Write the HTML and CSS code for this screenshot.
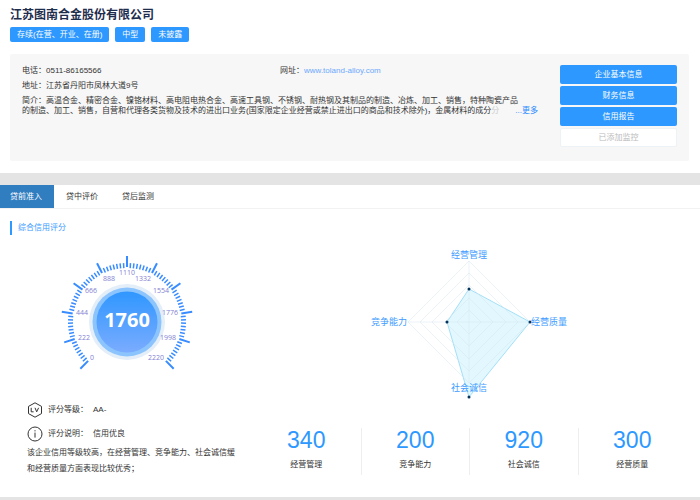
FILE: index.html
```html
<!DOCTYPE html>
<html lang="zh-CN">
<head>
<meta charset="utf-8">
<meta name="viewport" content="width=device-width, initial-scale=1">
<title>江苏图南合金股份有限公司</title>
<link rel="stylesheet" href="styles.css">
</head>
<body>
<header class="company">
  <h1 class="company-name">江苏图南合金股份有限公司</h1>
  <div class="tags">
    <span class="tag">存续(在营、开业、在册)</span>
    <span class="tag">中型</span>
    <span class="tag">未披露</span>
  </div>
  <section class="info">
    <div class="details">
      <div class="detail-row">
        <p>电话：0511-86165566</p>
        <p>网址：<a class="site" href="#site">www.toland-alloy.com</a></p>
      </div>
      <p>地址：江苏省丹阳市凤林大道9号</p>
      <div class="intro">
        <p>简介：高温合金、精密合金、镍铬材料、高电阻电热合金、高速工具钢、不锈钢、耐热钢及其制品的制造、冶炼、加工、销售，特种陶瓷产品</p>
        <p class="intro-last"><span class="intro-text">的制造、加工、销售，自营和代理各类货物及技术的进出口业务(国家限定企业经营或禁止进出口的商品和技术除外)，金属材料的成分<span class="fade">分</span></span><a class="more" href="#more">...更多</a></p>
      </div>
    </div>
    <div class="actions">
      <button class="action" type="button">企业基本信息</button>
      <button class="action" type="button">财务信息</button>
      <button class="action" type="button">信用报告</button>
      <button class="action action-done" type="button" disabled>已添加监控</button>
    </div>
  </section>
</header>
<main class="report">
  <nav class="tabs">
    <a class="tab tab-active" href="#before">贷前准入</a>
    <a class="tab" href="#during">贷中评价</a>
    <a class="tab" href="#after">贷后监测</a>
  </nav>
  <h2 class="section-title">综合信用评分</h2>
  <div class="panels">
    <section class="score">
      <svg class="gauge" viewBox="-72 -72 144 128" role="img" aria-label="1760">
        <defs>
          <linearGradient id="disc" x1="0" y1="0" x2="0" y2="1">
            <stop offset="0" stop-color="#3097ff"/>
            <stop offset="1" stop-color="#7aacff"/>
          </linearGradient>
        </defs>
        <g id="ticks"></g>
        <circle r="38" fill="#e3eef9"/>
        <circle r="34.500" fill="#8cc4fd"/>
        <circle r="30.500" fill="url(#disc)"/>
        <text class="gauge-value" y="5">1760</text>
        <g class="gauge-labels">
          <text x="-35" y="38">0</text>
          <text x="-43" y="18">222</text>
          <text x="-45" y="-7">444</text>
          <text x="-36" y="-29">666</text>
          <text x="-18" y="-41">888</text>
          <text x="0" y="-47">1110</text>
          <text x="16" y="-41">1332</text>
          <text x="34" y="-29">1554</text>
          <text x="43" y="-7">1776</text>
          <text x="41" y="18">1998</text>
          <text x="29" y="38">2220</text>
        </g>
      </svg>
      <dl class="rating">
        <div class="rating-row">
          <svg class="rating-icon" viewBox="0 0 16 16" aria-hidden="true">
            <path d="M8 .8 14.500 4.400V11.600L8 15.200 1.500 11.600V4.400Z"/>
            <path d="M4.200 5.800V9.800H6.600M8 5.800 9.700 9.800 11.600 5.800"/>
          </svg>
          <dt>评分等级：</dt><dd>AA-</dd>
        </div>
        <div class="rating-row">
          <svg class="rating-icon" viewBox="0 0 16 16" aria-hidden="true">
            <circle cx="8" cy="8" r="7"/>
            <path d="M8 6.600V11.600M8 4.200V5.400"/>
          </svg>
          <dt>评分说明：</dt><dd>信用优良</dd>
        </div>
      </dl>
      <p class="remark">该企业信用等级较高，在经营管理、竞争能力、社会诚信缓<br>和经营质量方面表现比较优秀；</p>
    </section>
    <section class="dimensions">
      <svg class="radar" viewBox="-105 -80 210 162" role="img" aria-label="经营管理 竞争能力 社会诚信 经营质量">
        <path class="radar-area" d="M0-33 61 0 0 75-22 0Z"/>
        <g class="radar-grid">
          <path d="M0-61 61 0 0 61-61 0Z"/>
          <path d="M0-49 49 0 0 49-49 0Z"/>
          <path d="M0-37 37 0 0 37-37 0Z"/>
          <path d="M0-24 24 0 0 24-24 0Z"/>
          <path d="M0-12 12 0 0 12-12 0Z"/>
          <path d="M0-61V61M-61 0H61"/>
        </g>
        <g class="radar-labels">
          <text x="0" y="-64">经营管理</text>
          <text x="-80" y="3">竞争能力</text>
          <text x="0" y="69">社会诚信</text>
          <text x="80" y="3">经营质量</text>
        </g>
        <g class="radar-points">
          <circle cx="0" cy="-33" r="1.500"/>
          <circle cx="61" cy="0" r="1.500"/>
          <circle cx="0" cy="75" r="1.500"/>
          <circle cx="-22" cy="0" r="1.500"/>
        </g>
      </svg>
      <ul class="stats">
        <li><strong>340</strong><span>经营管理</span></li>
        <li><strong>200</strong><span>竞争能力</span></li>
        <li><strong>920</strong><span>社会诚信</span></li>
        <li><strong>300</strong><span>经营质量</span></li>
      </ul>
    </section>
  </div>
</main>
<script src="gauge.js"></script>
</body>
</html>
```
FILE: gauge.js
```js
// Ten labelled divisions over 270 degrees, each with minor ticks between.
const ticks = document.getElementById('ticks');
const perDivision = 8;
const total = 10 * perDivision;
for (let i = 0; i <= total; i++) {
  const major = i % perDivision === 0;
  const line = document.createElementNS('http://www.w3.org/2000/svg', 'line');
  line.setAttribute('y1', major ? -66 : -59);
  line.setAttribute('y2', major ? -55 : -54);
  line.setAttribute('class', major ? 'tick tick-major' : 'tick');
  line.setAttribute('transform', `rotate(${-135 + (270 * i) / total})`);
  ticks.appendChild(line);
}
```
FILE: styles.css
```css
* {
  box-sizing: border-box;
}

body {
  margin: 0;
  background: #e4e4e4;
  color: #333;
  font: 8px/12px "Liberation Sans", "Noto Sans CJK SC", sans-serif;
}

h1, h2, p, dl, dd, ul {
  margin: 0;
  padding: 0;
}

a {
  text-decoration: none;
}

.company {
  padding: 7px 11px 12px 10px;
  background: #fff;
}

.company-name {
  color: #1f2d4d;
  font-size: 12px;
  line-height: 16px;
}

.tags {
  display: flex;
  gap: 6px;
  margin-top: 4px;
}

.tag {
  padding: 0 7px;
  border-radius: 2px;
  background: #2d98ff;
  color: #fff;
  line-height: 15px;
}

.info {
  display: flex;
  justify-content: space-between;
  gap: 20px;
  margin-top: 12px;
  padding: 11px 12px 14px;
  border-radius: 2px;
  background: #f7f7f7;
}

.details {
  flex: 0 1 516px;
  display: flex;
  flex-direction: column;
  gap: 3px;
  min-width: 0;
}

.detail-row {
  display: grid;
  grid-template-columns: 1fr 1fr;
}

.site {
  color: #6ca8ff;
}

.intro {
  padding-top: 1px;
  line-height: 10px;
}

.intro-last {
  display: flex;
  justify-content: space-between;
}

.fade {
  color: #ccc;
}

.more {
  color: #2d8cff;
}

.actions {
  flex: 0 0 117px;
  display: flex;
  flex-direction: column;
  gap: 2px;
}

.action {
  height: 19px;
  padding: 0;
  border: 0;
  border-radius: 2px;
  background: #2d98ff;
  color: #fff;
  font: inherit;
}

.action-done {
  border: 1px solid #edf2f6;
  background: #fff;
  color: #bbb;
}

.report {
  margin-top: 12px;
  padding-bottom: 20px;
  background: #fff;
}

.tabs {
  display: flex;
  border-bottom: 1px solid #f2f2f2;
}

.tab {
  padding: 0 12px;
  color: #333;
  line-height: 23px;
}

.tab-active {
  padding: 0 12px 0 10px;
  background: #307dbf;
  color: #fff;
}

.section-title {
  margin: 12px 10px 0;
  padding-left: 6px;
  border-left: 2px solid #2d98ff;
  color: #3d9bff;
  font-size: 8px;
  font-weight: 400;
  line-height: 14px;
}

.panels {
  display: grid;
  grid-template-columns: 36fr 64fr;
}

.score {
  padding: 15px 0 0 27px;
}

.gauge {
  display: block;
  width: 144px;
  margin-left: 28px;
}

.tick {
  stroke: #388cff;
  stroke-width: 1.5;
}

.tick-major {
  stroke-width: 2;
}

.gauge-value {
  fill: #fff;
  font: 700 20px "Open Sans", sans-serif;
  text-anchor: middle;
}

.gauge-labels {
  fill: #8282d2;
  font: 7px "Open Sans", sans-serif;
  text-anchor: middle;
}

.rating {
  display: flex;
  flex-direction: column;
  gap: 8px;
  margin-top: 24px;
}

.rating-row {
  display: flex;
  align-items: center;
  gap: 5px;
}

.rating-icon {
  width: 16px;
  height: 16px;
  fill: none;
  stroke: #333;
}

.remark {
  margin-top: 3px;
  line-height: 16px;
}

.dimensions {
  display: flex;
  flex-direction: column;
  padding: 7px 14px 0 0;
}

.radar {
  width: 210px;
  align-self: center;
}

.radar-grid {
  fill: none;
  stroke: #d5e5ee;
  stroke-opacity: .45;
}

.radar-area {
  fill: #e2f7fe;
  stroke: #a4e0f8;
}

.radar-points {
  fill: #04335c;
}

.radar-labels {
  fill: #3d9bff;
  font-size: 9px;
  text-anchor: middle;
}

.stats {
  display: grid;
  grid-template-columns: repeat(4, 1fr);
  margin-top: 24px;
  list-style: none;
}

.stats li {
  display: flex;
  flex-direction: column;
  align-items: center;
  gap: 7px;
  height: 47px;
}

.stats li + li {
  border-left: 1px solid #eee;
}

.stats strong {
  color: #2d98ff;
  font-size: 23px;
  font-weight: 400;
  line-height: 24px;
}
```
